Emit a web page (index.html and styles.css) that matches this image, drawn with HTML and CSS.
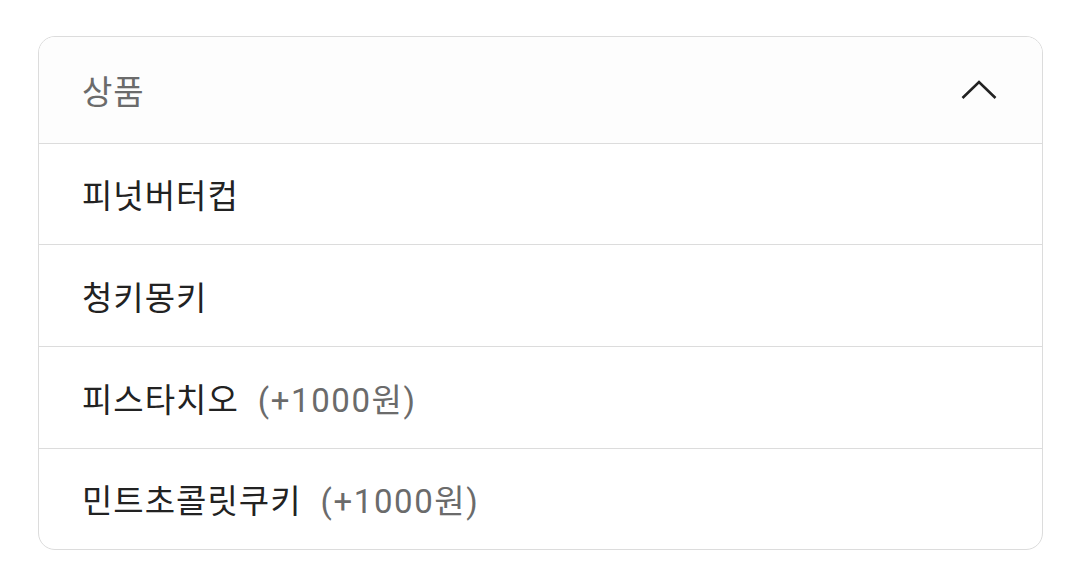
FILE: index.html
```html
<!DOCTYPE html>
<html lang="ko">
<head>
    <meta charset="utf-8">
    <title>상품 선택</title>
    <link rel="stylesheet" href="styles.css">
</head>
<body>
    <div class="select-box">
        <div class="select-header">
            <span class="select-title">상품</span>
            <svg class="chevron" width="36" height="20" viewBox="0 0 36 20">
                <polyline points="1.5,18 18,2 34.5,18" fill="none" stroke="#222" stroke-width="2.6"/>
            </svg>
        </div>
        <ul class="option-list">
            <li class="option">피넛버터컵</li>
            <li class="option">청키몽키</li>
            <li class="option">피스타치오<span class="extra">(+1000원)</span></li>
            <li class="option">민트초콜릿쿠키<span class="extra">(+1000원)</span></li>
        </ul>
    </div>
</body>
</html>
```

FILE: styles.css
```css
body {
    margin: 0;
    padding: 36px 37px 0 38px;
    background-color: #fff;
    font-family: Roboto, "Noto Sans CJK KR", sans-serif;
}

.select-box {
    border: 1px solid #dcdcdc;
    border-radius: 17px;
    overflow: hidden;
    background-color: #fff;
}

.select-header {
    display: flex;
    align-items: center;
    justify-content: space-between;
    height: 106px;
    padding: 0 45px 0 43px;
    background-color: #fdfdfd;
    border-bottom: 1px solid #dcdcdc;
}

.select-title {
    font-size: 33px;
    letter-spacing: 1px;
    color: #6b6b6b;
}

.chevron {
    display: block;
}

.option-list {
    list-style: none;
    margin: 0;
    padding: 0;
}

.option {
    display: flex;
    align-items: center;
    height: 101px;
    padding-left: 43px;
    font-size: 33px;
    letter-spacing: 1px;
    color: #222;
    border-bottom: 1px solid #dcdcdc;
}

.option:first-child {
    height: 100px;
}

.option:last-child {
    border-bottom: none;
    height: 100px;
}

.extra {
    margin-left: 19px;
    letter-spacing: 1.6px;
    color: #6b6b6b;
}
```
